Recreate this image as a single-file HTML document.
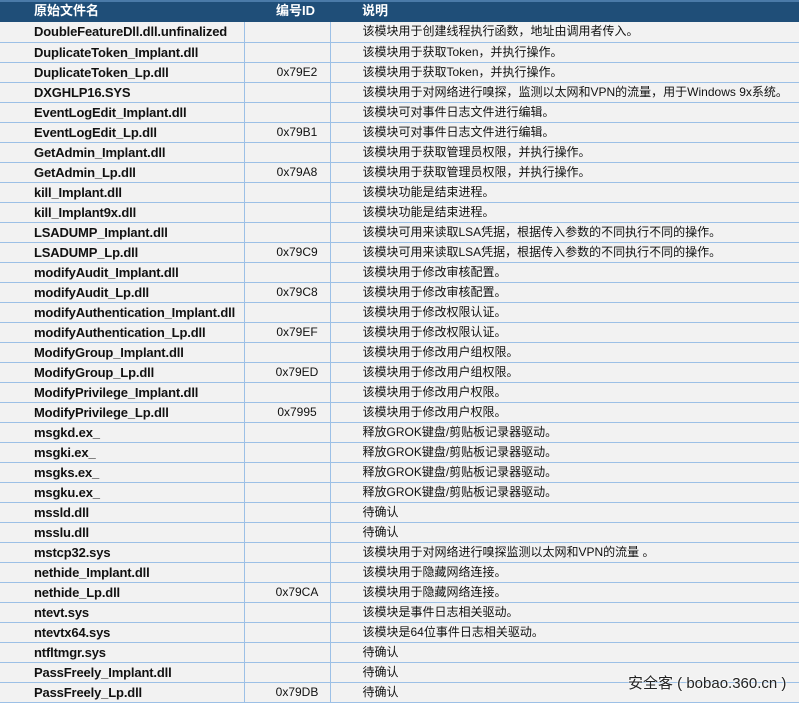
<!DOCTYPE html><html><head><meta charset="utf-8"><style>
body{margin:0;width:799px;height:701px;overflow:hidden;background:#f2f2f2;font-family:"Liberation Sans","Noto Sans CJK SC",sans-serif;position:relative}
table{border-collapse:collapse;width:799px;table-layout:fixed;position:absolute;top:0;left:0}
th{background:#1f4e78;color:#fff;font-size:13px;font-weight:bold;height:21px;line-height:17px;padding:0;text-align:left;border-top:2px solid #4a7aa8;box-sizing:border-box;vertical-align:top}
td{height:20px;line-height:19px;padding:0;border:1px solid #9cc0e6;border-top:none;font-size:12px;color:#111;box-sizing:border-box;white-space:nowrap;overflow:hidden;vertical-align:middle}
td:first-child{border-left:none;font-weight:bold;font-size:13px;padding-left:34px;letter-spacing:-0.15px}
td:nth-child(2){text-align:center;padding-left:20px}
td:nth-child(3){padding-left:32px;border-right:none}
.wm{position:absolute;left:628px;top:674px;font-size:15px;line-height:20px;color:#222;text-shadow:0 0 2px #fff,0 0 2px #fff}
</style></head><body>
<table><colgroup><col style="width:244px"><col style="width:86px"><col></colgroup>
<tr><th style="padding-left:34px">原始文件名</th><th style="padding-left:32px">编号ID</th><th style="padding-left:32px">说明</th></tr>
<tr><td>DoubleFeatureDll.dll.unfinalized</td><td></td><td>该模块用于创建线程执行函数，地址由调用者传入。</td></tr>
<tr><td>DuplicateToken_Implant.dll</td><td></td><td>该模块用于获取Token，并执行操作。</td></tr>
<tr><td>DuplicateToken_Lp.dll</td><td>0x79E2</td><td>该模块用于获取Token，并执行操作。</td></tr>
<tr><td>DXGHLP16.SYS</td><td></td><td>该模块用于对网络进行嗅探，监测以太网和VPN的流量，用于Windows 9x系统。</td></tr>
<tr><td>EventLogEdit_Implant.dll</td><td></td><td>该模块可对事件日志文件进行编辑。</td></tr>
<tr><td>EventLogEdit_Lp.dll</td><td>0x79B1</td><td>该模块可对事件日志文件进行编辑。</td></tr>
<tr><td>GetAdmin_Implant.dll</td><td></td><td>该模块用于获取管理员权限，并执行操作。</td></tr>
<tr><td>GetAdmin_Lp.dll</td><td>0x79A8</td><td>该模块用于获取管理员权限，并执行操作。</td></tr>
<tr><td>kill_Implant.dll</td><td></td><td>该模块功能是结束进程。</td></tr>
<tr><td>kill_Implant9x.dll</td><td></td><td>该模块功能是结束进程。</td></tr>
<tr><td>LSADUMP_Implant.dll</td><td></td><td>该模块可用来读取LSA凭据，根据传入参数的不同执行不同的操作。</td></tr>
<tr><td>LSADUMP_Lp.dll</td><td>0x79C9</td><td>该模块可用来读取LSA凭据，根据传入参数的不同执行不同的操作。</td></tr>
<tr><td>modifyAudit_Implant.dll</td><td></td><td>该模块用于修改审核配置。</td></tr>
<tr><td>modifyAudit_Lp.dll</td><td>0x79C8</td><td>该模块用于修改审核配置。</td></tr>
<tr><td>modifyAuthentication_Implant.dll</td><td></td><td>该模块用于修改权限认证。</td></tr>
<tr><td>modifyAuthentication_Lp.dll</td><td>0x79EF</td><td>该模块用于修改权限认证。</td></tr>
<tr><td>ModifyGroup_Implant.dll</td><td></td><td>该模块用于修改用户组权限。</td></tr>
<tr><td>ModifyGroup_Lp.dll</td><td>0x79ED</td><td>该模块用于修改用户组权限。</td></tr>
<tr><td>ModifyPrivilege_Implant.dll</td><td></td><td>该模块用于修改用户权限。</td></tr>
<tr><td>ModifyPrivilege_Lp.dll</td><td>0x7995</td><td>该模块用于修改用户权限。</td></tr>
<tr><td>msgkd.ex_</td><td></td><td>释放GROK键盘/剪贴板记录器驱动。</td></tr>
<tr><td>msgki.ex_</td><td></td><td>释放GROK键盘/剪贴板记录器驱动。</td></tr>
<tr><td>msgks.ex_</td><td></td><td>释放GROK键盘/剪贴板记录器驱动。</td></tr>
<tr><td>msgku.ex_</td><td></td><td>释放GROK键盘/剪贴板记录器驱动。</td></tr>
<tr><td>mssld.dll</td><td></td><td>待确认</td></tr>
<tr><td>msslu.dll</td><td></td><td>待确认</td></tr>
<tr><td>mstcp32.sys</td><td></td><td>该模块用于对网络进行嗅探监测以太网和VPN的流量 。</td></tr>
<tr><td>nethide_Implant.dll</td><td></td><td>该模块用于隐藏网络连接。</td></tr>
<tr><td>nethide_Lp.dll</td><td>0x79CA</td><td>该模块用于隐藏网络连接。</td></tr>
<tr><td>ntevt.sys</td><td></td><td>该模块是事件日志相关驱动。</td></tr>
<tr><td>ntevtx64.sys</td><td></td><td>该模块是64位事件日志相关驱动。</td></tr>
<tr><td>ntfltmgr.sys</td><td></td><td>待确认</td></tr>
<tr><td>PassFreely_Implant.dll</td><td></td><td>待确认</td></tr>
<tr><td>PassFreely_Lp.dll</td><td>0x79DB</td><td>待确认</td></tr>
</table>
<div class="wm">安全客 ( bobao.360.cn )</div>
</body></html>
